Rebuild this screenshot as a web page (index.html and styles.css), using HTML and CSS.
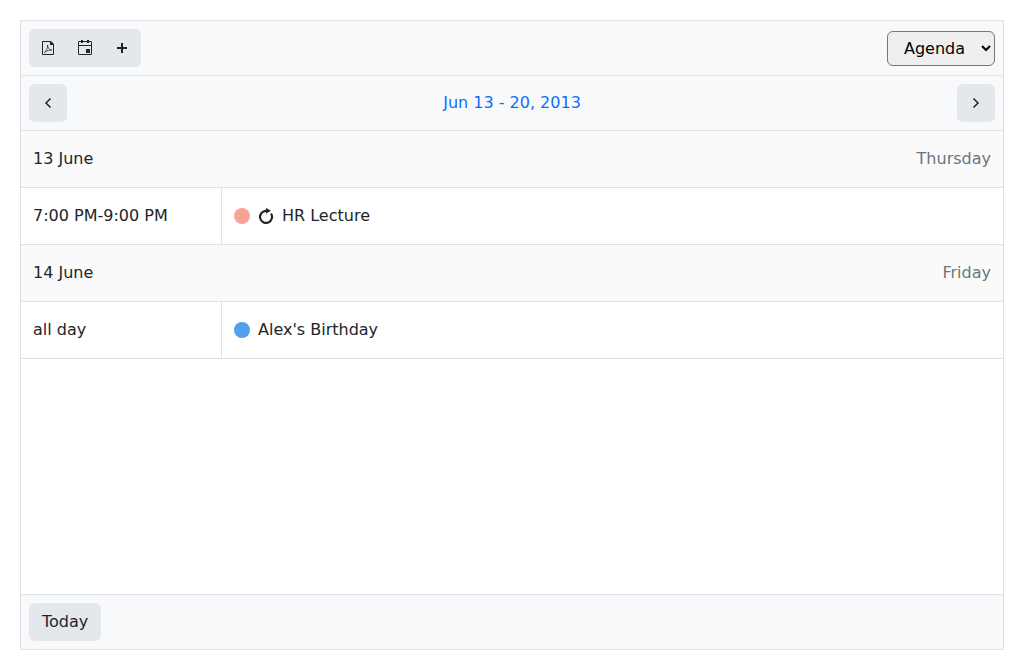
FILE: index.html
```html
<!DOCTYPE html>
<html lang="en">
<head>
  <meta charset="utf-8">
  <title>Scheduler</title>
  <link rel="stylesheet" href="styles.css">
</head>
<body>
  <main class="scheduler">
    <header class="toolbar">
      <div class="button-group">
        <button class="button" type="button" aria-label="Export to PDF">
          <svg class="icon" viewBox="0 0 16 16" aria-hidden="true">
            <path fill="currentColor" fill-rule="evenodd" d="M3 1h8l3 3v10a1 1 0 0 1-1 1H3a1 1 0 0 1-1-1V2a1 1 0 0 1 1-1zM3 2v12h10V5h-3V2z"/>
            <path fill="none" stroke="currentColor" stroke-width="0.700" d="M4.300 12.600C6 11.600 7.800 8 7.600 5c0 3 2 5 4.400 5.200-2.500-.3-5 .2-7.700 2.400z"/>
          </svg>
        </button>
        <button class="button" type="button" aria-label="Export to calendar">
          <svg class="icon" viewBox="0 0 16 16" aria-hidden="true">
            <path fill="currentColor" fill-rule="evenodd" d="M4 0h2v1h4V0h2v1h2l1 1v12l-1 1H2l-1-1V2l1-1h2zM2 2v3h12V2h-2v1h-2V2H6v1H4V2zM2 6v8h12V6z"/>
            <path fill="currentColor" d="M9 9h4v4H9z"/>
          </svg>
        </button>
        <button class="button" type="button" aria-label="Add event">
          <svg class="icon" viewBox="0 0 16 16" aria-hidden="true">
            <path fill="currentColor" d="M7 3h2v4h4v2H9v4H7V9H3V7h4z"/>
          </svg>
        </button>
      </div>
      <select class="view-select" aria-label="View">
        <option>Agenda</option>
      </select>
    </header>

    <nav class="toolbar" aria-label="Date range">
      <button class="button" type="button" aria-label="Previous">
        <svg class="icon" viewBox="0 0 16 16" aria-hidden="true">
          <path fill="none" stroke="currentColor" stroke-width="1.500" d="M10.500 3.500 6 8l4.500 4.500"/>
        </svg>
      </button>
      <a class="date-range" href="#">Jun 13 - 20, 2013</a>
      <button class="button" type="button" aria-label="Next">
        <svg class="icon" viewBox="0 0 16 16" aria-hidden="true">
          <path fill="none" stroke="currentColor" stroke-width="1.500" d="M5.500 3.500 10 8l-4.500 4.500"/>
        </svg>
      </button>
    </nav>

    <div class="agenda-area">
      <table class="agenda">
        <tbody>
          <tr class="day">
            <th colspan="2" scope="rowgroup">
              <div class="day-heading"><span>13 June</span><span class="weekday">Thursday</span></div>
            </th>
          </tr>
          <tr>
            <td class="time">7:00 PM-9:00 PM</td>
            <td>
              <div class="event">
                <span class="dot dot-coral"></span>
                <svg class="icon" viewBox="0 0 16 16" aria-hidden="true">
                  <path fill="none" stroke="currentColor" stroke-width="2.200" d="M9.500 2.900H8A6 6 0 1 0 13 5.500"/>
                  <path fill="currentColor" d="M8 0v5.600L13 2.800z"/>
                </svg>
                <span>HR Lecture</span>
              </div>
            </td>
          </tr>
        </tbody>
        <tbody>
          <tr class="day">
            <th colspan="2" scope="rowgroup">
              <div class="day-heading"><span>14 June</span><span class="weekday">Friday</span></div>
            </th>
          </tr>
          <tr>
            <td class="time">all day</td>
            <td>
              <div class="event">
                <span class="dot dot-blue"></span>
                <span>Alex's Birthday</span>
              </div>
            </td>
          </tr>
        </tbody>
      </table>
    </div>

    <footer class="toolbar footer">
      <button class="button" type="button">Today</button>
    </footer>
  </main>
</body>
</html>
```

FILE: styles.css
```css
* {
  box-sizing: border-box;
}

body {
  display: flex;
  min-height: 100vh;
  margin: 0;
  padding: 20px;
  background: #fff;
  color: #212529;
  font: 16px/24px "DejaVu Sans", sans-serif;
}

.scheduler {
  display: flex;
  flex: 1;
  flex-direction: column;
  border: 1px solid #dee2e6;
}

.toolbar {
  display: flex;
  align-items: center;
  justify-content: space-between;
  padding: 8px;
  border-bottom: 1px solid #dee2e6;
  background: #f8f9fa;
}

.footer {
  border-top: 1px solid #dee2e6;
  border-bottom: 0;
}

.button-group {
  display: flex;
  border-radius: 6px;
  background: #e4e7eb;
}

.button-group .button + .button {
  margin-left: -1px;
}

.button {
  display: flex;
  align-items: center;
  justify-content: center;
  min-width: 38px;
  height: 38px;
  padding: 0 13px;
  border: 0;
  border-radius: 6px;
  background: #e4e7eb;
  color: inherit;
  font: inherit;
}

.button:has(.icon) {
  padding: 0 11px;
}

.icon {
  flex: none;
  width: 16px;
  height: 16px;
}

.view-select {
  height: 35px;
  padding: 0 12px;
  border: 1px solid #767676;
  border-radius: 6px;
  background-color: #efefef;
  color: #000;
  font: inherit;
}

.date-range {
  color: #0d6efd;
  text-decoration: none;
}

.agenda-area {
  flex: 1;
}

.agenda {
  width: 100%;
  border-collapse: separate;
  border-spacing: 0;
}

.agenda th,
.agenda td {
  padding: 16px 12px;
  border-bottom: 1px solid #dee2e6;
  font-weight: 400;
  text-align: left;
}

.day {
  background: #fafafa;
}

.day-heading {
  display: flex;
  justify-content: space-between;
}

.weekday {
  color: #6c757d;
}

.agenda .time {
  width: 201px;
  border-right: 1px solid #dee2e6;
}

.event {
  display: flex;
  align-items: center;
  gap: 8px;
}

.dot {
  width: 16px;
  height: 16px;
  border-radius: 50%;
}

.dot-coral {
  background: #f8a398;
}

.dot-blue {
  background: #519fed;
}
```
